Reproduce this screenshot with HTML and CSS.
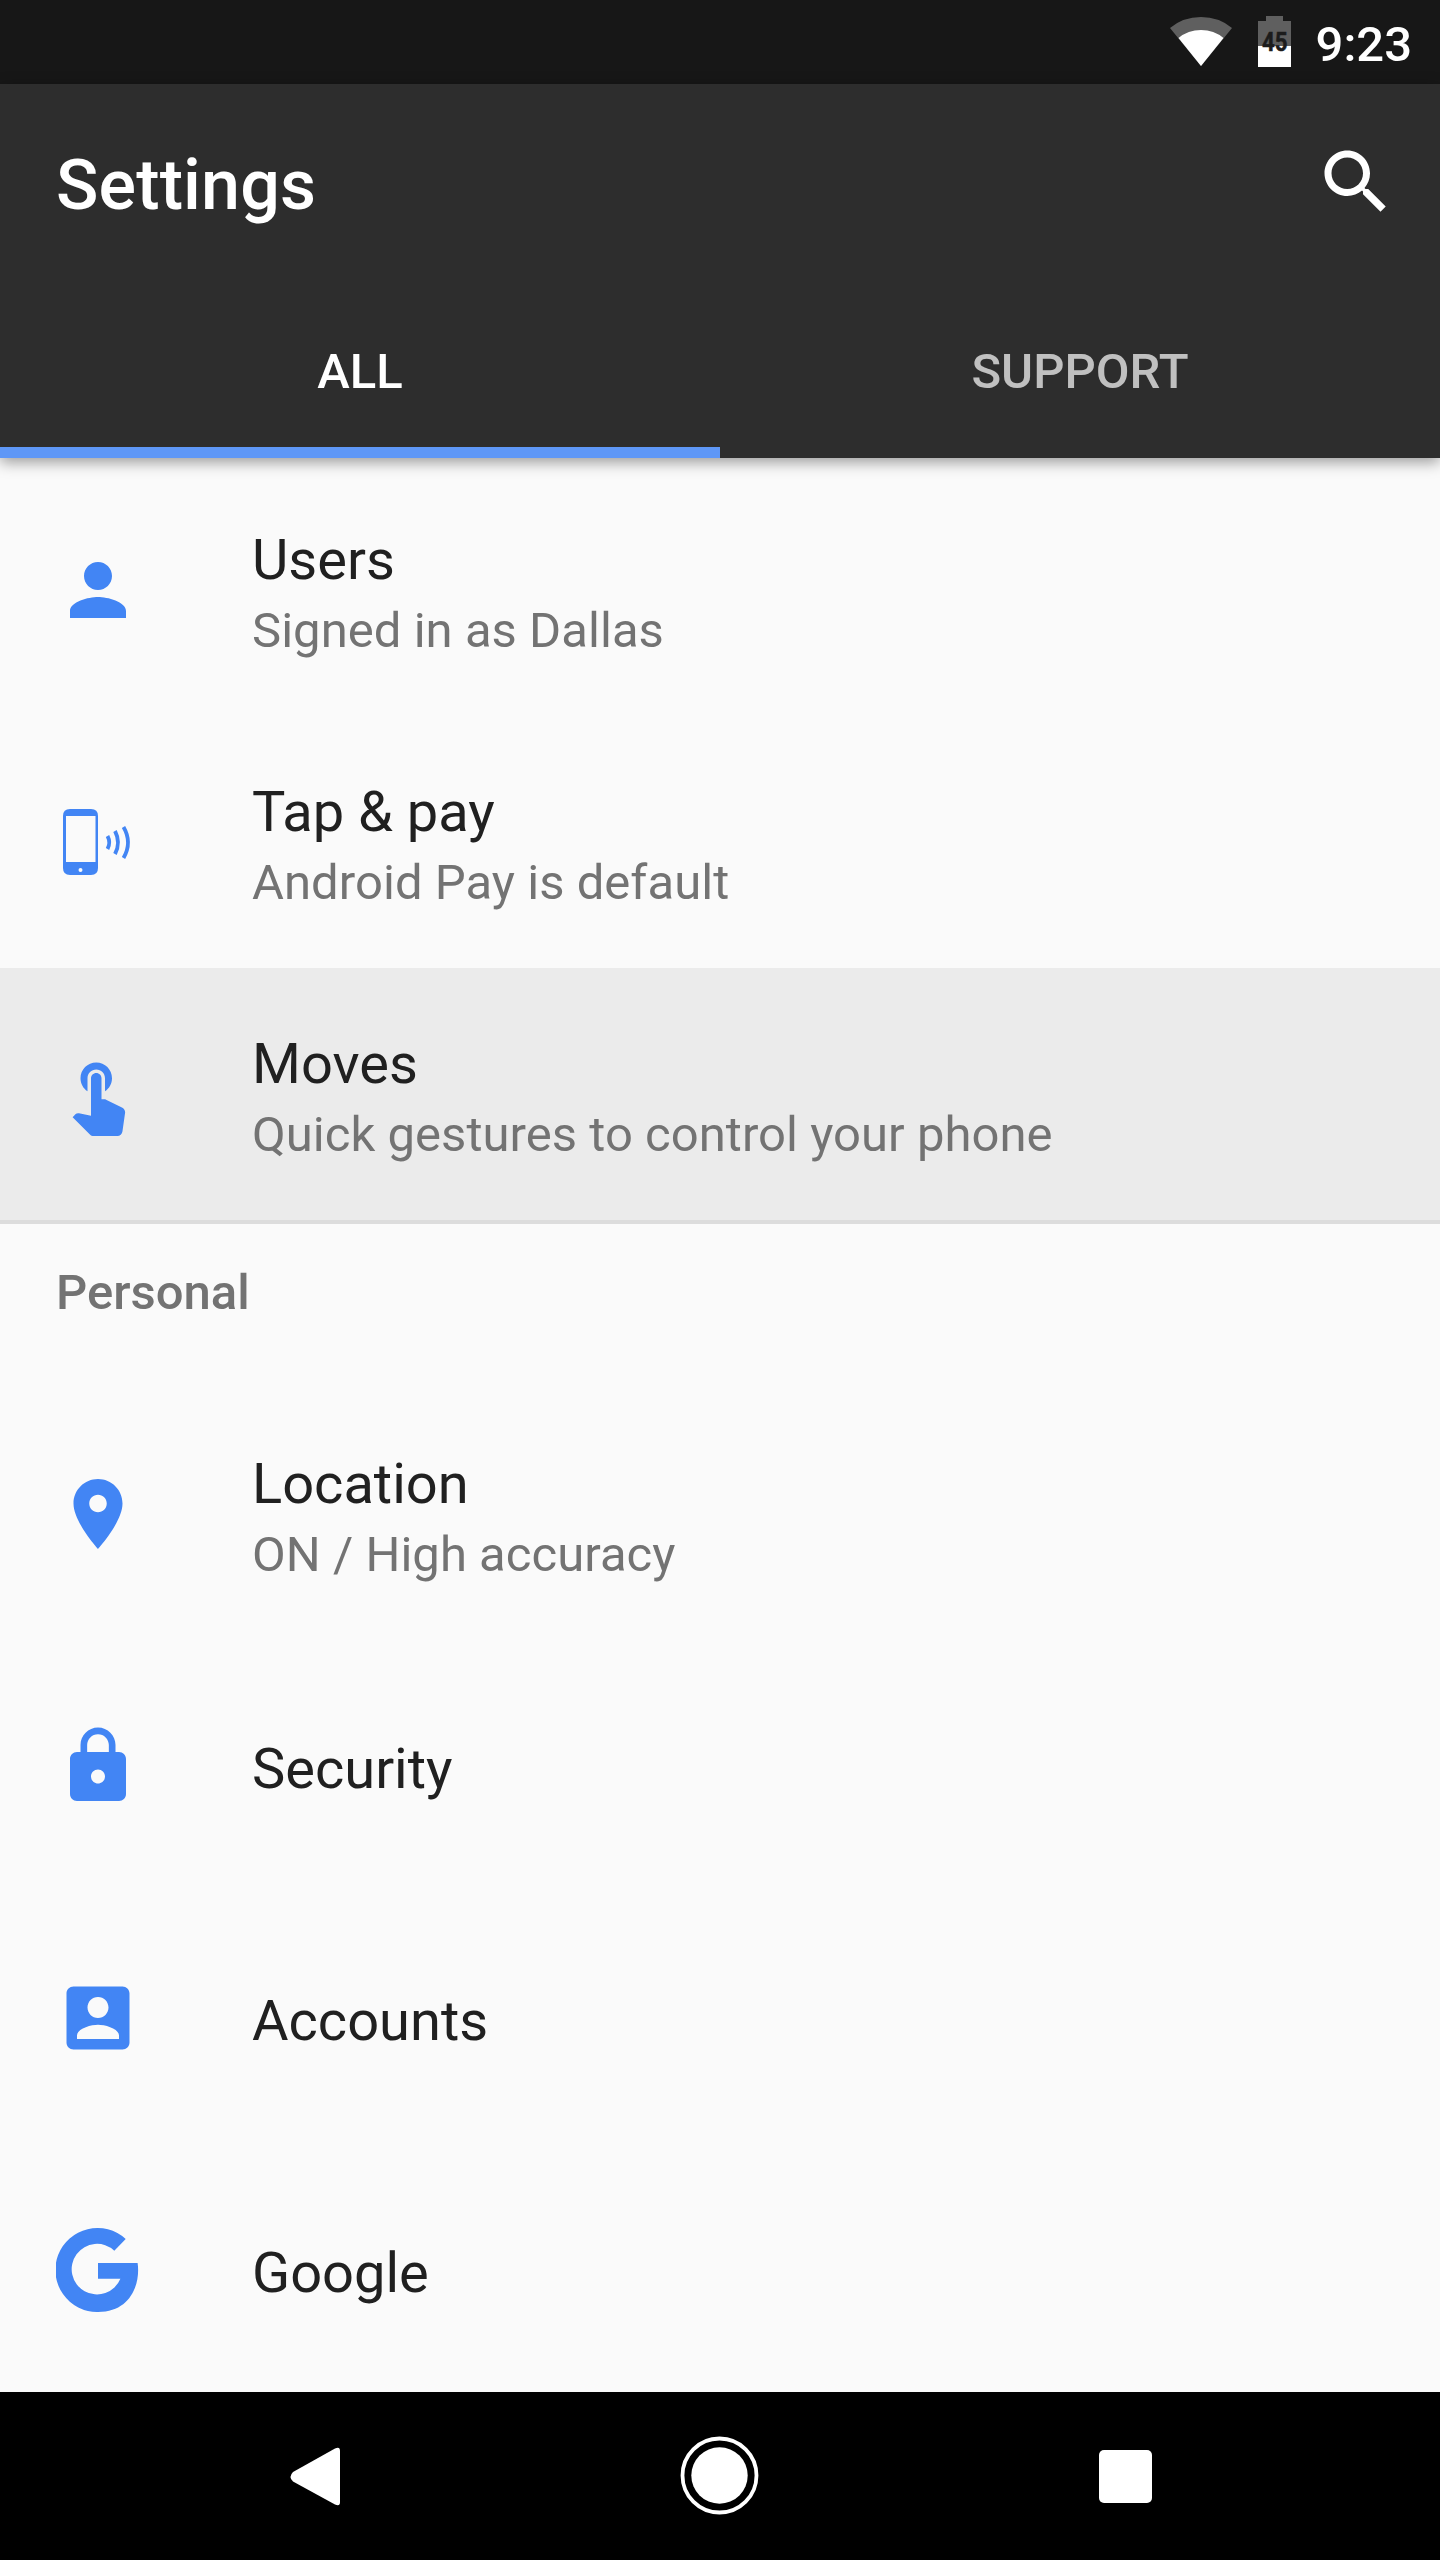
FILE: index.html
```html
<!DOCTYPE html>
<html lang="en">
<head>
<meta charset="utf-8">
<title>Settings</title>
<link rel="stylesheet" href="styles.css">
</head>
<body>
<div class="screen">
  <div class="status-bar">
    <svg class="wifi" viewBox="0 0 62 50" width="62" height="50">
      <path fill="#5f5f5f" d="M0 11Q13 0 31 0T62 11L31 49Z"/>
      <path fill="#fff" d="M8.5 21Q18 13 31 13T53.500 21L31 49Z"/>
    </svg>
    <svg class="battery" viewBox="0 0 33 51" width="33" height="51">
      <path fill="#5f5f5f" d="M8 0h17v5h8v26H0V5h8z"/>
      <path fill="#fff" d="M0 30h33v21H0z"/>
      <text class="battery-level" x="4" y="35" textLength="25.500" lengthAdjust="spacingAndGlyphs">45</text>
    </svg>
    <span class="clock">9:23</span>
  </div>

  <header class="header">
    <div class="toolbar">
      <h1 class="title">Settings</h1>
      <svg class="icon icon-search" viewBox="0 0 24 24"><path d="M15.5 14h-.79l-.28-.27C15.41 12.59 16 11.11 16 9.500 16 5.910 13.090 3 9.500 3S3 5.910 3 9.500 5.910 16 9.500 16c1.610 0 3.090-.59 4.230-1.570l.27.28v.79l5 4.990L20.490 19l-4.990-5zm-6 0C7.010 14 5 11.990 5 9.500S7.010 5 9.500 5 14 7.010 14 9.500 11.990 14 9.500 14z"/></svg>
    </div>
    <nav class="tabs">
      <div class="tab tab-active">ALL</div>
      <div class="tab">SUPPORT</div>
    </nav>
  </header>

  <main class="list">
    <div class="row">
      <svg class="icon" viewBox="0 0 24 24"><path d="M12 12c2.210 0 4-1.790 4-4s-1.790-4-4-4-4 1.790-4 4 1.790 4 4 4zm0 2c-2.670 0-8 1.340-8 4v2h16v-2c0-2.660-5.330-4-8-4z"/></svg>
      <div class="text"><div class="name">Users</div><div class="summary">Signed in as Dallas</div></div>
    </div>
    <div class="row">
      <svg class="icon" viewBox="0 0 84 84">
        <path fill-rule="evenodd" d="M14 9h21q7 0 7 7v52q0 7-7 7H14q-7 0-7-7V16q0-7 7-7zM10 16v46h29.500V16zM24.500 68a2 2 0 1 0 0 4 2 2 0 1 0 0-4z"/>
        <g class="waves"><path d="M51.500 36q3.500 6.500 0 13"/><path d="M59 31q6 11.500 0 23"/><path d="M67.500 27q9 15.500 0 31"/></g>
      </svg>
      <div class="text"><div class="name">Tap &amp; pay</div><div class="summary">Android Pay is default</div></div>
    </div>
    <div class="row row-pressed">
      <svg class="icon" viewBox="0 0 24 24"><path d="M9 11.240V7.500C9 6.120 10.120 5 11.500 5S14 6.120 14 7.500v3.740c1.210-.81 2-2.180 2-3.740C16 5.010 13.990 3 11.500 3S7 5.010 7 7.500c0 1.560.79 2.930 2 3.740zm9.840 4.630l-4.540-2.260c-.17-.07-.35-.11-.54-.11H13v-6c0-.83-.67-1.500-1.500-1.500S10 6.670 10 7.500v10.740l-3.430-.72c-.08-.01-.15-.03-.24-.03-.31 0-.59.13-.79.33l-.79.8 4.940 4.940c.27.27.65.44 1.060.44h6.790c.75 0 1.330-.55 1.440-1.280l.75-5.270c.01-.07.02-.14.02-.2 0-.62-.38-1.160-.91-1.380z"/></svg>
      <div class="text"><div class="name">Moves</div><div class="summary">Quick gestures to control your phone</div></div>
    </div>
    <h2 class="section">Personal</h2>
    <div class="row">
      <svg class="icon" viewBox="0 0 24 24"><path d="M12 2C8.130 2 5 5.130 5 9c0 5.250 7 13 7 13s7-7.750 7-13c0-3.870-3.130-7-7-7zm0 9.500c-1.380 0-2.500-1.120-2.500-2.500s1.120-2.500 2.500-2.500 2.500 1.120 2.500 2.500-1.120 2.500-2.500 2.500z"/></svg>
      <div class="text"><div class="name">Location</div><div class="summary">ON / High accuracy</div></div>
    </div>
    <div class="row">
      <svg class="icon" viewBox="0 0 24 24"><path d="M18 8h-1V6c0-2.760-2.240-5-5-5S7 3.240 7 6v2H6c-1.100 0-2 .9-2 2v10c0 1.100.9 2 2 2h12c1.100 0 2-.9 2-2V10c0-1.100-.9-2-2-2zm-6 9c-1.100 0-2-.9-2-2s.9-2 2-2 2 .9 2 2-.9 2-2 2zm3.100-9H8.900V6c0-1.710 1.390-3.100 3.100-3.100 1.710 0 3.100 1.390 3.100 3.100v2z"/></svg>
      <div class="text"><div class="name">Security</div></div>
    </div>
    <div class="row">
      <svg class="icon" viewBox="0 0 24 24"><path d="M3 5v14c0 1.100.89 2 2 2h14c1.100 0 2-.9 2-2V5c0-1.100-.9-2-2-2H5c-1.110 0-2 .9-2 2zm12 4c0 1.660-1.340 3-3 3s-3-1.340-3-3 1.340-3 3-3 3 1.340 3 3zm-9 8c0-2 4-3.100 6-3.100s6 1.100 6 3.100v1H6v-1z"/></svg>
      <div class="text"><div class="name">Accounts</div></div>
    </div>
    <div class="row">
      <svg class="icon" viewBox="0 0 84 84"><path d="M69.700 11L58.300 22.700A25.300 25.300 0 1 0 64.400 50.700H42V35H81.600C84.500 54 76 84 42 84A42 42 0 1 1 69.700 11z"/></svg>
      <div class="text"><div class="name">Google</div></div>
    </div>
  </main>

  <footer class="nav-bar">
    <svg viewBox="0 0 80 80" width="80" height="80"><path d="M18 36L60 12.500Q65 10 65 15V66Q65 71 60 68.500L18 45.500Q13 41 18 36z"/></svg>
    <svg viewBox="0 0 80 80" width="80" height="80"><circle cx="39.500" cy="39.500" r="37" fill="none" stroke="#fff" stroke-width="3.800"/><circle cx="39.500" cy="39.500" r="28.200"/></svg>
    <svg viewBox="0 0 80 80" width="80" height="80"><rect x="14" y="14" width="53" height="53" rx="5"/></svg>
  </footer>
</div>
</body>
</html>
```
FILE: styles.css
```css
* {
  box-sizing: border-box;
}

body {
  margin: 0;
  font-family: Roboto, sans-serif;
  background: #fafafa;
}

.screen {
  display: flex;
  flex-direction: column;
  width: 1440px;
  height: 2560px;
  overflow: hidden;
}

.status-bar {
  display: flex;
  flex: none;
  justify-content: flex-end;
  height: 84px;
  padding: 16px 28px 0 0;
  background: #171717;
}

.wifi {
  margin: 1px 26px 0 0;
}

.battery {
  margin-right: 25px;
}

.battery-level {
  font-size: 25px;
  font-weight: 700;
  fill: #1c1c1c;
  stroke: #1c1c1c;
  stroke-width: 0.5px;
}

.clock {
  color: #fff;
  font-size: 49px;
  font-weight: 500;
  line-height: 58px;
}

.header {
  position: relative;
  flex: none;
  height: 374px;
  background: #2d2d2d;
  box-shadow: 0 4px 14px rgba(0, 0, 0, 0.4);
}

.toolbar {
  display: flex;
  align-items: center;
  justify-content: space-between;
  height: 196px;
  padding: 0 42px 0 56px;
}

.title {
  margin: 0;
  padding-top: 6px;
  color: #fff;
  font-size: 70px;
  font-weight: 500;
  line-height: 82px;
  letter-spacing: 0.15px;
}

.icon {
  flex: none;
  width: 84px;
  height: 84px;
  fill: #4285f4;
}

.icon-search {
  fill: #fff;
}

.waves {
  fill: none;
  stroke: #4285f4;
  stroke-width: 3.8;
}

.tabs {
  display: grid;
  grid-template-columns: 1fr 1fr;
  height: 178px;
}

.tab {
  padding-top: 59px;
  border-bottom: 11px solid transparent;
  color: #c0c0c0;
  font-size: 49px;
  font-weight: 500;
  line-height: 66px;
  text-align: center;
}

.tab-active {
  border-color: #5e97f6;
  color: #fff;
}

.list {
  flex: 1;
  min-height: 0;
  padding-top: 6px;
  overflow: hidden;
}

.row {
  display: flex;
  gap: 112px;
  align-items: center;
  height: 252px;
  padding-left: 56px;
}

.row-pressed {
  background: #ebebeb;
}

.text {
  margin-top: 6px;
}

.name {
  color: #202020;
  font-size: 56px;
  line-height: 74px;
}

.summary {
  height: 66px;
  color: #737373;
  font-size: 49px;
  line-height: 68px;
  letter-spacing: 0.04px;
}

.section {
  height: 168px;
  margin: 0;
  padding: 36px 56px 0;
  border-top: 4px solid #dcdcdc;
  color: #737373;
  font-size: 49px;
  font-weight: 500;
  line-height: 66px;
}

.nav-bar {
  display: grid;
  flex: none;
  grid-template-columns: repeat(3, 405px);
  align-items: center;
  justify-content: center;
  justify-items: center;
  height: 168px;
  background: #000;
  fill: #fff;
}
```
